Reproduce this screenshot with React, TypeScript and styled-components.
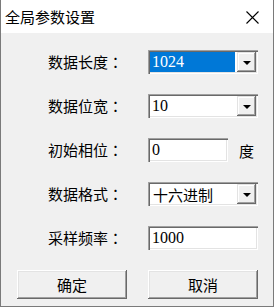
import React from "react";
import styled, { createGlobalStyle } from "styled-components";

const Global = createGlobalStyle`
  html, body { margin: 0; padding: 0; background: #f0f0f0; }
  #root { width: 274px; height: 307px; }
`;

const Win = styled.div`
  box-sizing: border-box;
  width: 274px;
  height: 307px;
  border: 1px solid #7a7a7a;
  border-top: none;
  background: #f0f0f0;
  display: flex;
  flex-direction: column;
  font-family: "Noto Sans CJK SC", sans-serif;
  color: #000;
`;

const TitleBar = styled.div`
  height: 33px;
  flex: none;
  background: #fff;
  display: flex;
  align-items: center;
  justify-content: space-between;
  padding: 0 14px 0 4px;
  font-size: 15px;
`;

const Close = styled.svg`
  width: 13px;
  height: 13px;
  margin-top: 2px;
`;

const Body = styled.div`
  padding: 17px 0 0 0;
  display: flex;
  flex-direction: column;
  gap: 20px;
`;

const Row = styled.div`
  display: grid;
  grid-template-columns: 100px auto;
  padding-left: 47px;
  height: 24px;
  align-items: center;
`;

const Control = styled.div`
  display: flex;
  align-items: center;
`;

const Label = styled.span`
  font-size: 15px;
  line-height: 24px;
`;

const Colon = styled.span`
  font-family: "Noto Sans CJK TC", sans-serif;
`;

const Unit = styled.span`
  font-size: 15px;
  margin-left: 11px;
`;

const sunken = `
  box-sizing: border-box;
  box-shadow: inset 1px 1px #a0a0a0, inset 2px 2px #696969, inset -1px -1px #ffffff, inset -2px -2px #e3e3e3;
`;

const Field = styled.div<{ $w?: number }>`
  ${sunken}
  width: ${(p) => p.$w ?? 110}px;
  height: 24px;
  background: #fff;
  display: flex;
  align-items: center;
  padding: 2px;
`;

const ValueText = styled.span<{ $sel?: boolean; $cjk?: boolean }>`
  flex: 1;
  height: 100%;
  display: flex;
  align-items: center;
  padding-left: ${(p) => (p.$cjk ? 3 : 2)}px;
  background: ${(p) => (p.$sel ? "#0078d7" : "transparent")};
  color: ${(p) => (p.$sel ? "#fff" : "#000")};
  font-family: ${(p) => (p.$cjk ? '"Noto Sans CJK SC", sans-serif' : '"Liberation Serif", serif')};
  font-size: ${(p) => (p.$cjk ? 15 : 16)}px;
  margin-right: 2px;
`;

const DropBtn = styled.div`
  box-sizing: border-box;
  width: 19px;
  height: 100%;
  background: #f0f0f0;
  box-shadow: inset -1px -1px #696969, inset 1px 1px #e3e3e3, inset -2px -2px #a0a0a0, inset 2px 2px #fff;
  display: flex;
  align-items: center;
  justify-content: center;
`;

const Arrow = styled.div`
  width: 0;
  height: 0;
  border-left: 4px solid transparent;
  border-right: 4px solid transparent;
  border-top: 4px solid #000;
  margin-top: 1px;
`;

const Buttons = styled.div`
  display: grid;
  grid-template-columns: 110px 110px;
  column-gap: 21px;
  padding-left: 16px;
`;

const Btn = styled.button`
  box-sizing: border-box;
  height: 29px;
  border: none;
  background: #f0f0f0;
  box-shadow: inset -1px -1px #696969, inset 1px 1px #ffffff, inset -2px -2px #a0a0a0, inset 2px 2px #e3e3e3;
  font-family: "Noto Sans CJK SC", sans-serif;
  font-size: 15px;
  color: #000;
  padding: 0;
`;

const Combo = ({ value, sel, cjk }: { value: string; sel?: boolean; cjk?: boolean }) => (
  <Field>
    <ValueText $sel={sel} $cjk={cjk}>{value}</ValueText>
    <DropBtn>
      <Arrow />
    </DropBtn>
  </Field>
);

const Edit = ({ value, w }: { value: string; w?: number }) => (
  <Field $w={w}>
    <ValueText>{value}</ValueText>
  </Field>
);

const L = ({ t }: { t: string }) => (
  <Label>
    {t}
    <Colon>：</Colon>
  </Label>
);

export default function App() {
  return (
    <>
      <Global />
      <Win>
        <TitleBar>
          <span>全局参数设置</span>
          <Close viewBox="0 0 13 13">
            <path d="M0.5 0.5 L12.5 12.5 M12.5 0.5 L0.5 12.5" stroke="#000" strokeWidth="1.1" />
          </Close>
        </TitleBar>
        <Body>
          <Row>
            <L t="数据长度" />
            <Control>
              <Combo value="1024" sel />
            </Control>
          </Row>
          <Row>
            <L t="数据位宽" />
            <Control>
              <Combo value="10" />
            </Control>
          </Row>
          <Row>
            <L t="初始相位" />
            <Control>
              <Edit value="0" w={80} />
              <Unit>度</Unit>
            </Control>
          </Row>
          <Row>
            <L t="数据格式" />
            <Control>
              <Combo value="十六进制" cjk />
            </Control>
          </Row>
          <Row>
            <L t="采样频率" />
            <Control>
              <Edit value="1000" />
            </Control>
          </Row>
          <Buttons>
            <Btn>确定</Btn>
            <Btn>取消</Btn>
          </Buttons>
        </Body>
      </Win>
    </>
  );
}
